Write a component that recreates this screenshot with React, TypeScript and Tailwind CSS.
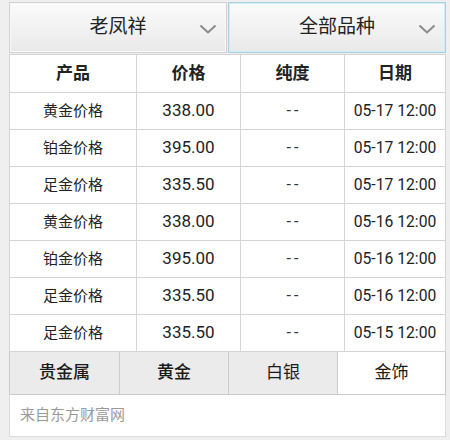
import React from "react";

const rows = [
  { name: "黄金价格", price: "338.00", date: "05-17 12:00" },
  { name: "铂金价格", price: "395.00", date: "05-17 12:00" },
  { name: "足金价格", price: "335.50", date: "05-17 12:00" },
  { name: "黄金价格", price: "338.00", date: "05-16 12:00" },
  { name: "铂金价格", price: "395.00", date: "05-16 12:00" },
  { name: "足金价格", price: "335.50", date: "05-16 12:00" },
  { name: "足金价格", price: "335.50", date: "05-15 12:00" },
];

const tabs = [
  { label: "贵金属", active: false, bold: true },
  { label: "黄金", active: false, bold: true },
  { label: "白银", active: false, bold: false },
  { label: "金饰", active: true, bold: false },
];

function Chevron() {
  return (
    <svg
      className="absolute right-[9px] top-[21px] h-[10px] w-[18px]"
      viewBox="0 0 18 10"
      fill="none"
      stroke="#8a8a8a"
      strokeWidth={2}
      aria-hidden="true"
    >
      <path d="M1.5 1.5 9 8.5l7.5-7" />
    </svg>
  );
}

function Select({ label, focused }: { label: string; focused?: boolean }) {
  return (
    <div
      className={`relative flex h-[51px] items-center justify-center border bg-gradient-to-b from-[#fbfbfb] to-[#e9e9e9] text-[19px] text-[#222] ${
        focused ? "border-[#a6d2e2] shadow-[inset_0_0_0_1px_#d4ebf3]" : "border-[#d2d2d2] shadow-[inset_0_0_0_1px_#f8f8f8]"
      }`}
    >
      {label}
      <Chevron />
    </div>
  );
}

export default function App() {
  return (
    <div
      className="h-[440px] w-[450px] bg-[#efefef] pl-[9px] pr-[4px] pt-[2px]"
      style={{ fontFamily: "Roboto, 'Noto Sans CJK SC', sans-serif" }}
    >
      <div className="grid grid-cols-2 gap-px">
        <Select label="老凤祥" />
        <Select label="全部品种" focused />
      </div>

      {/* table */}
      <div className="mt-px grid grid-cols-[126px_103px_103px_100px] gap-px bg-[#d4d4d4] p-px">
        {["产品", "价格", "纯度", "日期"].map((h) => (
          <div
            key={h}
            className="flex h-[37px] items-center justify-center bg-white text-[17px] font-bold text-[#222]"
          >
            {h}
          </div>
        ))}
        {rows.map((r, i) => (
          <React.Fragment key={i}>
            <div className="flex h-[36px] items-center justify-center bg-white text-[15px] text-[#222]">
              {r.name}
            </div>
            <div className="flex h-[36px] items-center justify-center bg-white text-[17px] text-[#222]">
              {r.price}
            </div>
            <div className="flex h-[36px] items-center justify-center bg-white pl-[3px] text-[16px] tracking-[3px] text-[#333]">
              --
            </div>
            <div className="flex h-[36px] items-center justify-center bg-white text-[15.7px] text-[#222]">
              {r.date}
            </div>
          </React.Fragment>
        ))}
      </div>

      {/* tabs */}
      <div className="grid grid-cols-[109px_108px_108px_107px] gap-px bg-[#cbcbcb] px-px pb-px">
        {tabs.map((t) => (
          <div
            key={t.label}
            className={`flex h-[42px] items-center justify-center text-[17px] text-[#1a1a1a] ${
              t.active ? "bg-white" : "bg-[#ebebeb]"
            } ${t.bold ? "font-medium" : ""}`}
          >
            {t.label}
          </div>
        ))}
      </div>

      <div className="flex h-[42px] items-center border border-t-0 border-[#dcdcdc] bg-white pl-[10px] text-[15px] text-[#9a9a9a]">
        来自东方财富网
      </div>
    </div>
  );
}
